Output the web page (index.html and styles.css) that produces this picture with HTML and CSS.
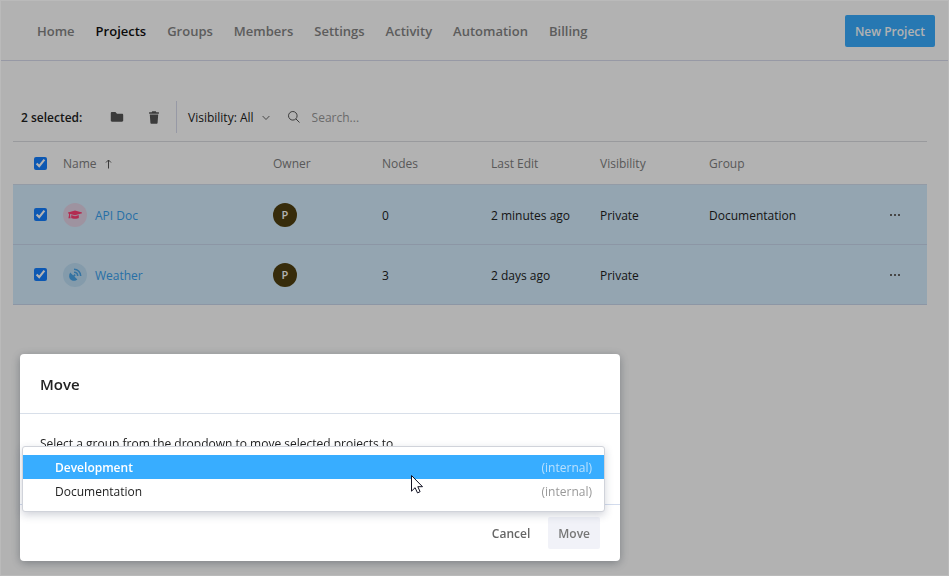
FILE: index.html
```html
<!DOCTYPE html>
<html lang="en">
<head>
<meta charset="utf-8">
<title>Projects</title>
<link rel="stylesheet" href="styles.css">
</head>
<body>
<div class="page">
  <header class="topbar">
    <nav class="nav">
      <a href="#">Home</a>
      <a href="#" class="active">Projects</a>
      <a href="#">Groups</a>
      <a href="#">Members</a>
      <a href="#">Settings</a>
      <a href="#">Activity</a>
      <a href="#">Automation</a>
      <a href="#">Billing</a>
    </nav>
    <button class="btn primary">New Project</button>
  </header>
  <main class="content">
    <div class="toolbar">
      <span class="count">2 selected:</span>
      <button class="icon-btn" aria-label="Move to group">
        <svg width="14" height="12" viewBox="0 0 14 12"><path d="M2 1h3.4l1.6 1.700h5c.7 0 1.200.5 1.200 1.200v5.600c0 .7-.5 1.200-1.200 1.200H2c-.7 0-1.200-.5-1.200-1.200V2.200C.8 1.500 1.300 1 2 1z" fill="currentColor"/></svg>
      </button>
      <button class="icon-btn" aria-label="Delete">
        <svg width="12" height="13" viewBox="0 0 12 13"><path d="M4.200.3h3.600l.5.900h2.600v1.500H1.100V1.200h2.600zM1.800 3.500h8.400l-.6 8.200c0 .6-.5 1-1.100 1h-5c-.6 0-1.100-.4-1.100-1z" fill="currentColor"/></svg>
      </button>
      <span class="divider"></span>
      <button class="filter">Visibility: All
        <svg width="8" height="6" viewBox="0 0 8 6"><path d="M.6 1 4 4.500 7.400 1" fill="none" stroke="#666" stroke-width="1"/></svg>
      </button>
      <label class="search">
        <svg width="14" height="14" viewBox="0 0 14 14"><g fill="none" stroke="#555" stroke-width="1"><circle cx="5.800" cy="5.800" r="4.300"/><path d="m9 9 3.500 3.500"/></g></svg>
        <input type="text" placeholder="Search..." aria-label="Search">
      </label>
    </div>
    <table class="projects">
      <colgroup><col class="c-check"><col class="c-name"><col class="c-data"><col class="c-data"><col class="c-data"><col class="c-data"><col class="c-data"><col class="c-data"></colgroup>
      <thead>
        <tr>
          <th class="check"><input type="checkbox" checked aria-label="Select all"></th>
          <th><span class="sort">Name <svg width="7" height="10" viewBox="0 0 7 10"><path d="M3.500 9.500V1M1 3.500 3.500 1 6 3.500" fill="none" stroke="#555" stroke-width="1"/></svg></span></th>
          <th>Owner</th><th>Nodes</th><th>Last Edit</th><th>Visibility</th><th>Group</th><th></th>
        </tr>
      </thead>
      <tbody>
        <tr>
          <td class="check"><input type="checkbox" checked aria-label="Select API Doc"></td>
          <td><a href="#" class="project"><span class="badge pink"><svg width="16" height="12" viewBox="0 0 16 12"><path d="M8 1.500 15 3.600v.7L8 6.300 3 5v1.300l.6 2.900H1.400L2 6.300V4.700L1 4.300v-.7z" fill="currentColor"/><path d="M4.200 6 8 7.200 11.800 6v3c-.8 1-6.800 1-7.600 0z" fill="currentColor"/></svg></span><span class="label">API Doc</span></a></td>
          <td><span class="avatar">P</span></td><td class="text">0</td><td class="text">2 minutes ago</td><td class="text">Private</td><td class="text">Documentation</td>
          <td class="more"><button aria-label="More actions"><svg width="12" height="4" viewBox="0 0 12 4"><path d="M1 1h2v2H1zM5 1h2v2H5zM9 1h2v2H9z" fill="#666"/></svg></button></td>
        </tr>
        <tr>
          <td class="check"><input type="checkbox" checked aria-label="Select Weather"></td>
          <td><a href="#" class="project"><span class="badge blue"><svg width="14" height="14" viewBox="0 0 14 14"><path d="M2.200 4.500 5.200 7.400 6.600 6l1.200 1.200-1.400 1.400 3 3C7.200 13.500 4 13 2.500 11.500S.5 7 2.200 4.500z" fill="currentColor"/><path d="M6 1.300c3.800 0 6.700 2.900 6.700 6.700M6 4.300c2.200 0 3.700 1.500 3.700 3.700" fill="none" stroke="currentColor" stroke-width="1.600"/></svg></span><span class="label">Weather</span></a></td>
          <td><span class="avatar">P</span></td><td class="text">3</td><td class="text">2 days ago</td><td class="text">Private</td><td></td>
          <td class="more"><button aria-label="More actions"><svg width="12" height="4" viewBox="0 0 12 4"><path d="M1 1h2v2H1zM5 1h2v2H5zM9 1h2v2H9z" fill="#666"/></svg></button></td>
        </tr>
      </tbody>
    </table>
  </main>
</div>
<div class="overlay">
  <section class="dialog" role="dialog" aria-labelledby="dialog-title">
    <h2 id="dialog-title">Move</h2>
    <div class="dialog-body">
      <p>Select a group from the dropdown to move selected projects to</p>
      <div class="field">
        <div class="menu" role="listbox">
          <button class="option selected" role="option" aria-selected="true"><span>Development</span><span class="hint">(internal)</span></button>
          <button class="option" role="option"><span>Documentation</span><span class="hint">(internal)</span></button>
          <svg class="pointer" width="14" height="20" viewBox="0 0 14 20"><path d="M1.500 1.500v15.700l3.600-3.500 2.400 5.200 2.600-1.200-2.300-5h4.700z" fill="#fff" stroke="#112" stroke-width="1"/></svg>
        </div>
      </div>
    </div>
    <footer class="dialog-footer">
      <button class="btn plain">Cancel</button>
      <button class="btn muted">Move</button>
    </footer>
  </section>
</div>
</body>
</html>
```
FILE: styles.css
```css
* { box-sizing: border-box; }

body {
  margin: 0;
  background: #fff;
  color: #222;
  font: 12px/20px "Open Sans", "Noto Sans", sans-serif;
}

button, input { font: inherit; color: inherit; }
button { border: 0; padding: 0; background: none; }
a { color: inherit; text-decoration: none; }
svg { display: block; flex: none; }

.page { min-height: 100vh; border: 1px solid #fff; }

.topbar {
  display: flex;
  align-items: center;
  justify-content: space-between;
  height: 60px;
  padding: 0 13px 0 36px;
  border-bottom: 1px solid #d8dcec;
}

.nav { display: flex; gap: 21px; font-size: 13px; font-weight: 600; color: #858585; }
.nav .active { color: #111; }

.btn { height: 32px; padding: 2px 10px 0; border-radius: 2px; font-weight: 600; }
.primary { background: #38adff; color: #fff; }
.plain { color: #666; }
.muted { background: #f1f2f8; color: #777; }

.content { padding: 40px 21px 0 12px; }

.toolbar { display: flex; align-items: center; height: 32px; padding-left: 8px; }
.count { width: 80px; padding-top: 2px; font-weight: 600; }
.icon-btn { display: grid; place-items: center; width: 32px; height: 32px; margin-right: 5px; color: #555; }
.divider { width: 1px; height: 32px; margin: 0 11px 0 1px; background: #d8dcec; }
.filter { display: flex; align-items: center; gap: 8px; margin-right: 17px; padding-top: 2px; }
.search { display: flex; align-items: center; gap: 11px; color: #999; }
.search input { width: 180px; border: 0; padding: 2px 0 0; background: none; outline: 0; }
.search input::placeholder { color: #999; opacity: 1; }

.projects {
  width: 100%;
  margin-top: 8px;
  border-collapse: separate;
  border-spacing: 0;
  table-layout: fixed;
  border-top: 1px solid #dcdde1;
}
.c-check { width: 50px; }
.c-name { width: 210px; }
.c-data { width: 109px; }
th { height: 43px; padding: 2px 0 0; border-bottom: 1px solid #d3dfee; text-align: left; font-weight: 400; color: #808080; }
td { height: 60px; padding: 0; border-bottom: 1px solid #c9d7ec; }
td.text, .label { padding-top: 2px; }
tbody tr { background: #d4edfe; }
.check { padding: 0 0 0 21px; }
.check input { display: block; width: 13px; height: 13px; margin: 0; accent-color: #147fff; }
.sort { display: flex; align-items: center; gap: 8px; }
.project { display: flex; align-items: center; gap: 8px; color: #38a0ee; }
.badge { display: grid; place-items: center; width: 24px; height: 24px; border-radius: 50%; }
.pink { background: #e2d3e6; color: #ff3f73; }
.blue { background: #bddef5; color: #4ba5e8; }
.avatar {
  display: grid;
  place-items: center;
  width: 24px;
  height: 24px;
  border-radius: 50%;
  background: #504010;
  color: #fff;
  font-size: 11px;
  font-weight: 600;
}
.more { padding-left: 71px; }
.more button { display: block; }

.overlay {
  position: fixed;
  inset: 0;
  padding: 353px 19px 0;
  border: 1px solid rgba(255, 255, 255, .1);
  background: rgba(0, 0, 0, .3);
}

.dialog {
  max-width: 600px;
  border-radius: 4px;
  background: #fff;
  box-shadow: 0 2px 10px rgba(40, 50, 60, .4);
}
.dialog h2 {
  margin: 0;
  padding: 20px 20px 19px;
  border-bottom: 1px solid #d8dfe9;
  font-size: 15px;
  line-height: 20px;
  font-weight: 600;
}
.dialog-body { padding: 20px 20px 16px; border-bottom: 1px solid #d3dced; }
.dialog-body p { margin: 0; }
.field { position: relative; height: 34px; }
.menu {
  position: absolute;
  top: -8px;
  left: -18px;
  right: -5px;
  padding: 8px 0;
  border: 1px solid #d0d3da;
  border-radius: 3px;
  background: #fff;
  box-shadow: 0 3px 8px rgba(40, 50, 80, .22);
}
.option { display: flex; justify-content: space-between; width: 100%; height: 24px; padding: 3px 12px 1px 32px; }
.hint { color: #999; }
.selected { background: #38adff; color: #fff; font-weight: 600; }
.selected .hint { color: #b9e0fd; font-weight: 400; }
.pointer { position: absolute; top: 27px; left: 387px; }

.dialog-footer { display: flex; justify-content: flex-end; gap: 8px; padding: 12px 20px; }
```
